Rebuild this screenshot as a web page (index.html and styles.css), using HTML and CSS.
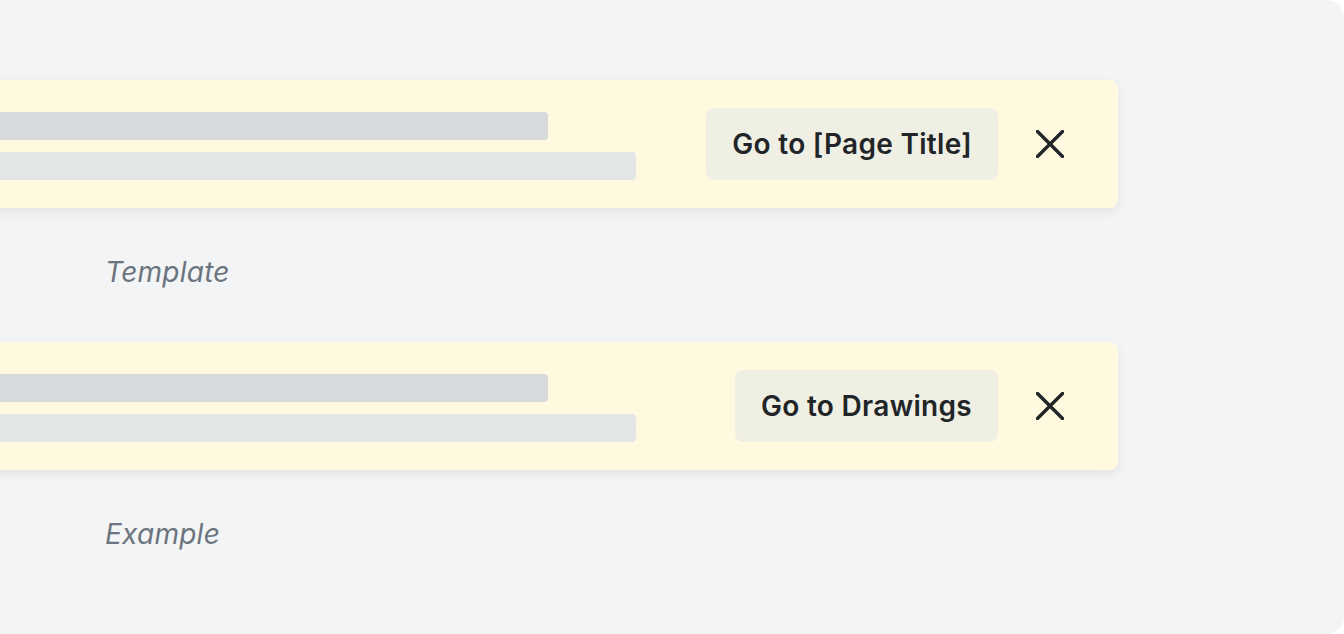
FILE: index.html
```html
<!DOCTYPE html>
<html lang="en">
<head>
<meta charset="utf-8">
<title>Banner</title>
<link rel="stylesheet" href="styles.css">
</head>
<body>
<main class="panel">
  <section class="sample">
    <div class="banner">
      <div class="lines">
        <div class="line line-a"></div>
        <div class="line line-b"></div>
      </div>
      <div class="actions">
        <button class="go" type="button">Go to [Page Title]</button>
        <button class="close" type="button" aria-label="Close">
          <svg viewBox="0 0 28 28" width="28" height="28" aria-hidden="true">
            <path d="M1.5 1.5 L26.5 26.5 M26.5 1.5 L1.5 26.5" stroke="#222528" stroke-width="3.4" stroke-linecap="square" fill="none"/>
          </svg>
        </button>
      </div>
    </div>
    <p class="caption">Template</p>
  </section>
  <section class="sample">
    <div class="banner">
      <div class="lines">
        <div class="line line-a"></div>
        <div class="line line-b"></div>
      </div>
      <div class="actions">
        <button class="go" type="button">Go to Drawings</button>
        <button class="close" type="button" aria-label="Close">
          <svg viewBox="0 0 28 28" width="28" height="28" aria-hidden="true">
            <path d="M1.5 1.5 L26.5 26.5 M26.5 1.5 L1.5 26.5" stroke="#222528" stroke-width="3.4" stroke-linecap="square" fill="none"/>
          </svg>
        </button>
      </div>
    </div>
    <p class="caption">Example</p>
  </section>
</main>
</body>
</html>
```
FILE: styles.css
```css
html, body {
  margin: 0;
  padding: 0;
  background: #ffffff;
}

body {
  width: 1344px;
  height: 634px;
  overflow: hidden;
  font-family: Inter, "Noto Sans", sans-serif;
}

.panel {
  box-sizing: border-box;
  width: 1344px;
  height: 634px;
  background: #f3f4f6;
  border-radius: 0 18px 18px 0;
  overflow: hidden;
  padding-top: 80px;
  display: flex;
  flex-direction: column;
  gap: 53px;
}

.sample {
  display: flex;
  flex-direction: column;
}

.banner {
  box-sizing: border-box;
  width: 1318px;
  height: 128px;
  margin-left: -200px;
  background: #fff9e0;
  border-radius: 8px;
  box-shadow: 0 4px 12px rgba(0, 0, 0, 0.07);
  display: flex;
  align-items: center;
  justify-content: space-between;
  padding-right: 48px;
}

.lines {
  display: flex;
  flex-direction: column;
  gap: 12px;
  margin-top: 4px;
}

.line {
  height: 28px;
  border-radius: 4px;
}

.line-a {
  width: 748px;
  background: #d6dadd;
}

.line-b {
  width: 836px;
  background: #e2e6e6;
}

.actions {
  display: flex;
  align-items: center;
  gap: 32px;
}

.go {
  height: 72px;
  padding: 0 26px;
  border: none;
  border-radius: 8px;
  background: #efefe3;
  color: #222528;
  font-family: Inter, "Noto Sans", sans-serif;
  font-size: 28px;
  font-weight: 600;
  letter-spacing: 0.3px;
  line-height: 34px;
  cursor: pointer;
}

.close {
  width: 40px;
  height: 40px;
  padding: 0;
  border: none;
  background: transparent;
  display: flex;
  align-items: center;
  justify-content: center;
  cursor: pointer;
}

.caption {
  margin: 47px 0 0 105px;
  font-size: 28px;
  letter-spacing: 0.25px;
  line-height: 34px;
  font-style: italic;
  color: #6c757e;
}
```
